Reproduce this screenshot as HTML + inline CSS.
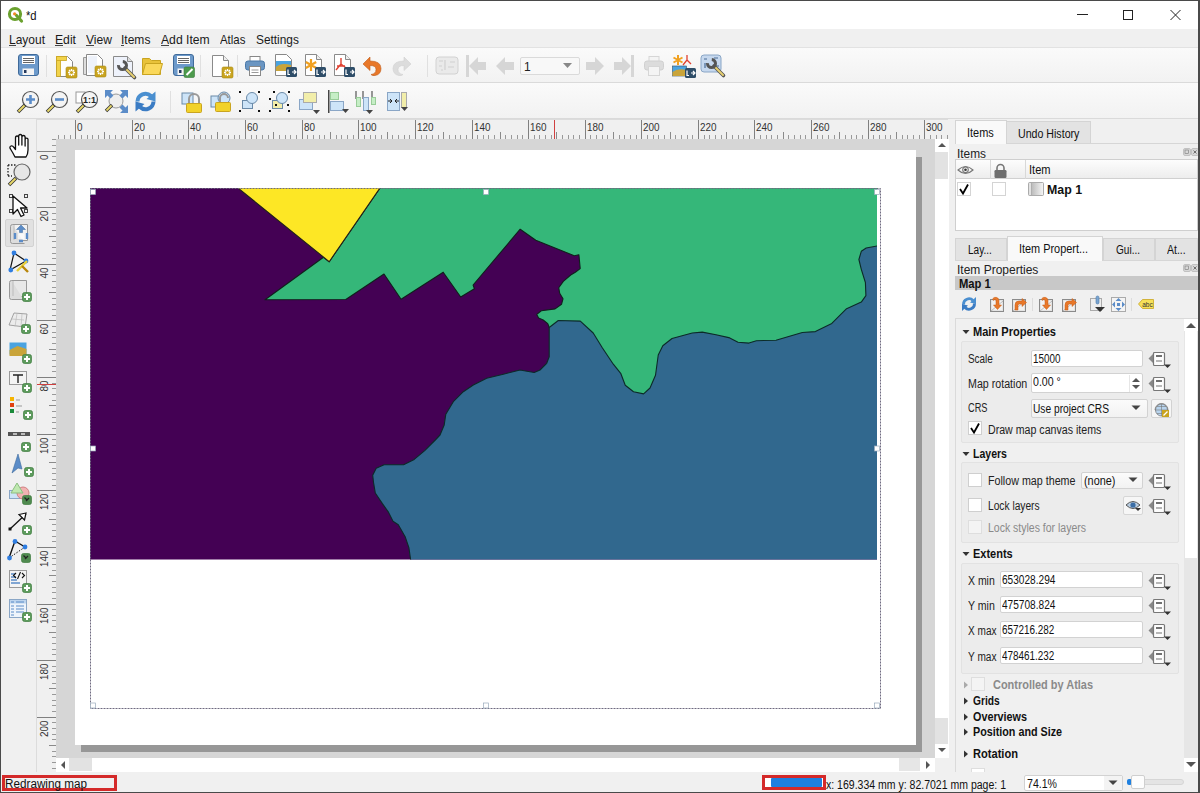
<!DOCTYPE html>
<html><head><meta charset="utf-8">
<style>
*{margin:0;padding:0;box-sizing:border-box}
html,body{width:1200px;height:793px;overflow:hidden}
body{position:relative;background:#f0f0f0;font-family:"Liberation Sans",sans-serif;font-size:12px;color:#000}
.a{position:absolute}
.t{position:absolute;white-space:nowrap;line-height:1;transform-origin:0 0}
svg{position:absolute;overflow:visible}
</style></head><body>
<!-- title bar -->
<div class="a" style="left:0;top:0;width:1200px;height:29px;background:#fff"></div>
<svg style="left:7px;top:6px" width="18" height="18" viewBox="0 0 18 18">
<circle cx="8" cy="8" r="5.6" fill="none" stroke="#6aa12e" stroke-width="3"/>
<path d="M9.5 9.5 L14.5 15" stroke="#6aa12e" stroke-width="3.2" stroke-linecap="round"/>
<circle cx="7.6" cy="7.8" r="1.6" fill="#f08a24"/>
</svg>
<div class="t" style="left:26px;top:9px;font-size:13px;color:#111;transform:scaleX(0.862)">*d</div>
<div class="a" style="left:1077px;top:14px;width:11px;height:1px;background:#222"></div>
<div class="a" style="left:1123px;top:10px;width:10px;height:10px;border:1px solid #222"></div>
<svg style="left:1170px;top:10px" width="11" height="10" viewBox="0 0 11 10"><path d="M0.5 0 L10.5 10 M10.5 0 L0.5 10" stroke="#222" stroke-width="1"/></svg>

<!-- menu bar -->
<div class="a" style="left:0;top:29px;width:1200px;height:18px;background:#f0f0f0"></div>
<div class="t" style="left:9px;top:33px;font-size:13px;color:#1a1a1a;transform:scaleX(0.922)">Layout</div>
<div class="t" style="left:55px;top:33px;font-size:13px;color:#1a1a1a;transform:scaleX(0.937)">Edit</div>
<div class="t" style="left:86px;top:33px;font-size:13px;color:#1a1a1a;transform:scaleX(0.930)">View</div>
<div class="t" style="left:121px;top:33px;font-size:13px;color:#1a1a1a;transform:scaleX(0.925)">Items</div>
<div class="t" style="left:161px;top:33px;font-size:13px;color:#1a1a1a;transform:scaleX(0.936)">Add Item</div>
<div class="t" style="left:220px;top:33px;font-size:13px;color:#1a1a1a;transform:scaleX(0.879)">Atlas</div>
<div class="t" style="left:256px;top:33px;font-size:13px;color:#1a1a1a;transform:scaleX(0.913)">Settings</div>
<div class="a" style="left:9px;top:45px;width:7px;height:1px;background:#444"></div>
<div class="a" style="left:55px;top:45px;width:8px;height:1px;background:#444"></div>
<div class="a" style="left:86px;top:45px;width:8px;height:1px;background:#444"></div>
<div class="a" style="left:121px;top:45px;width:3px;height:1px;background:#444"></div>
<div class="a" style="left:161px;top:45px;width:8px;height:1px;background:#444"></div>

<!-- toolbars bg -->
<div class="a" style="left:0;top:47px;width:1200px;height:36px;background:linear-gradient(#fafafa,#f2f2f2);border-top:1px solid #e2e2e2;border-bottom:1px solid #dadada"></div>
<div class="a" style="left:0;top:83px;width:1200px;height:36px;background:linear-gradient(#fafafa,#f2f2f2);border-bottom:1px solid #dadada"></div>
<!-- separators -->
<div class="a" style="left:46px;top:55px;width:1px;height:22px;background:#e0e0e0"></div>
<div class="a" style="left:200px;top:55px;width:1px;height:22px;background:#e0e0e0"></div>
<div class="a" style="left:237px;top:55px;width:1px;height:22px;background:#e0e0e0"></div>
<div class="a" style="left:427px;top:55px;width:1px;height:22px;background:#e0e0e0"></div>
<div class="a" style="left:170px;top:91px;width:1px;height:22px;background:#e0e0e0"></div>

<svg style="left:17px;top:54px" width="22" height="22" viewBox="0 0 22 22"><rect x="1.5" y="0.5" width="20" height="21" rx="2.5" fill="#6d9acb" stroke="#3f6a9a"/><rect x="5" y="2" width="13" height="8" fill="#fff"/><path d="M6 4.5h11M6 6.5h11M6 8.5h11" stroke="#666" stroke-width="1"/><rect x="5.5" y="14.5" width="11.5" height="6.5" fill="#f4f4f4"/><rect x="7" y="16" width="2.5" height="3" fill="#253a5e"/></svg>
<svg style="left:53px;top:54px" width="24" height="24" viewBox="0 0 24 24"><path d="M3.5 2.5h11l5 5v15h-16z" fill="#fff" stroke="#888"/><path d="M3.5 2.5h4v20h-4z" fill="#f2d34a" stroke="#c9a420" stroke-width="0.8"/><path d="M3.5 2.5h10v4h-10z" fill="#f2d34a" stroke="#c9a420" stroke-width="0.8"/><rect x="13" y="13" width="11" height="11" rx="1.5" fill="#c9a420" stroke="#a98a10" stroke-width="0.6"/><g stroke="#fff" stroke-width="1.3"><path d="M18.5 15v7M15 18.5h7M16 16l5 5M21 16l-5 5"/></g><circle cx="18.5" cy="18.5" r="1.6" fill="#c9a420"/></svg>
<svg style="left:82px;top:53px" width="24" height="25" viewBox="0 0 24 25"><path d="M1.5 4.5h12v17h-12z" fill="#ddd" stroke="#999"/><path d="M4.5 1.5h11l5 5v16h-16z" fill="#fff" stroke="#888"/><rect x="6" y="3" width="9" height="17" fill="#eef2fa"/><rect x="13" y="13" width="11" height="11" rx="1.5" fill="#c9a420" stroke="#a98a10" stroke-width="0.6"/><g stroke="#fff" stroke-width="1.3"><path d="M18.5 15v7M15 18.5h7M16 16l5 5M21 16l-5 5"/></g><circle cx="18.5" cy="18.5" r="1.6" fill="#c9a420"/></svg>
<svg style="left:112px;top:55px" width="24" height="24" viewBox="0 0 24 24"><path d="M1.5 1.5h14l5 5v15h-19z" fill="#eef2fb" stroke="#8a8a8a"/><path d="M15.5 1.5v5h5" fill="#ddd" stroke="#8a8a8a"/><g transform="translate(2,2)"><path d="M11 11l9.5 9.5" stroke="#555" stroke-width="3.6" stroke-linecap="round"/><path d="M12 12l8 8" stroke="#e8d070" stroke-width="2" stroke-linecap="round"/><circle cx="8.5" cy="8.5" r="4" fill="none" stroke="#555" stroke-width="3" stroke-dasharray="12.7 6 6.43 0"/></g></svg>
<svg style="left:141px;top:55px" width="23" height="21" viewBox="0 0 23 21"><path d="M1.5 3.5h7l2 2h9v14h-18z" fill="#e8c23a" stroke="#c9a420"/><path d="M1.5 19.5l3-11h17l-3 11z" fill="#fad85a" stroke="#c9a420"/></svg>
<svg style="left:172px;top:54px" width="23" height="24" viewBox="0 0 23 24"><rect x="1.5" y="0.5" width="20" height="21" rx="2.5" fill="#6d9acb" stroke="#3f6a9a"/><rect x="5" y="2" width="13" height="8" fill="#fff"/><path d="M6 4.5h11M6 6.5h11M6 8.5h11" stroke="#666" stroke-width="1"/><rect x="5.5" y="14.5" width="8" height="6.5" fill="#f4f4f4"/><rect x="7" y="16" width="2.5" height="3" fill="#253a5e"/><rect x="12" y="13" width="10.5" height="10.5" rx="1.5" fill="#4c9a4c" stroke="#3b7a3b" stroke-width="0.6"/><path d="M14.5 21l6-6" stroke="#fff" stroke-width="2"/></svg>
<svg style="left:209px;top:54px" width="24" height="24" viewBox="0 0 24 24"><path d="M3.5 1.5h11l5 5v16h-16z" fill="#fff" stroke="#8a8a8a" stroke-width="1"/><path d="M14.5 1.5v5h5" fill="#eee" stroke="#8a8a8a" stroke-width="1"/><rect x="13" y="13" width="11" height="11" rx="1.5" fill="#c9a420" stroke="#a98a10" stroke-width="0.6"/><g stroke="#fff" stroke-width="1.3"><path d="M18.5 15v7M15 18.5h7M16 16l5 5M21 16l-5 5"/></g><circle cx="18.5" cy="18.5" r="1.6" fill="#c9a420"/></svg>
<svg style="left:244px;top:55px" width="22" height="21" viewBox="0 0 22 21"><rect x="6" y="1.5" width="10" height="5" fill="#fff" stroke="#888"/><rect x="1.5" y="6" width="19" height="9" rx="2.5" fill="#6b96c2" stroke="#4a78a8"/><rect x="5.5" y="11.5" width="11" height="9" fill="#fff" stroke="#888"/><path d="M7.5 15h7M7.5 17.5h7" stroke="#999"/></svg>
<svg style="left:273px;top:53px" width="24" height="25" viewBox="0 0 24 25"><path d="M2.5 1.5h11l5 5v16h-16z" fill="#fff" stroke="#888"/><rect x="3" y="8" width="15" height="10" fill="#4aa3e0"/><path d="M3 14q5-5 15-2v6h-15z" fill="#c9a43a"/><rect x="13" y="14" width="11" height="10" rx="1.5" fill="#2e4d68"/><path d="M15 16.5v5h2M19 19h4M21 17l2 2-2 2" stroke="#fff" stroke-width="1.2" fill="none"/></svg>
<svg style="left:302px;top:53px" width="24" height="25" viewBox="0 0 24 25"><path d="M3.5 1.5h11l5 5v16h-16z" fill="#fff" stroke="#8a8a8a" stroke-width="1"/><path d="M14.5 1.5v5h5" fill="#eee" stroke="#8a8a8a" stroke-width="1"/><g stroke="#f0a020" stroke-width="2.2"><path d="M9 6v12M3.8 9l10.4 6M3.8 15l10.4-6"/></g><rect x="13" y="14" width="11" height="10" rx="1.5" fill="#2e4d68"/><path d="M15 16.5v5h2M19 19h4M21 17l2 2-2 2" stroke="#fff" stroke-width="1.2" fill="none"/></svg>
<svg style="left:331px;top:53px" width="24" height="25" viewBox="0 0 24 25"><path d="M3.5 1.5h11l5 5v16h-16z" fill="#fff" stroke="#8a8a8a" stroke-width="1"/><path d="M14.5 1.5v5h5" fill="#eee" stroke="#8a8a8a" stroke-width="1"/><path d="M10 5v6l-5 6M10 11l5 4M6 13h8" stroke="#e04030" stroke-width="1.4" fill="none"/><rect x="13" y="14" width="11" height="10" rx="1.5" fill="#2e4d68"/><path d="M15 16.5v5h2M19 19h4M21 17l2 2-2 2" stroke="#fff" stroke-width="1.2" fill="none"/></svg>
<svg style="left:362px;top:56px" width="21" height="20" viewBox="0 0 21 20"><path d="M1 8l7-7v4q11 0 11 7.5 0 6-6 7-3 .5-4-1 5-.5 5-5 0-4-6-4v5z" fill="#e8782a" stroke="#c05a18" stroke-width="0.6"/></svg>
<svg style="left:391px;top:56px" width="21" height="20" viewBox="0 0 21 20"><g transform="translate(21,0) scale(-1,1)"><path d="M1 8l7-7v4q11 0 11 7.5 0 6-6 7-3 .5-4-1 5-.5 5-5 0-4-6-4v5z" fill="#dcdcdc" stroke="#d0d0d0" stroke-width="0.6"/></g></svg>
<svg style="left:435px;top:56px" width="24" height="19" viewBox="0 0 24 19"><rect x="1" y="1" width="22" height="17" rx="3" fill="#eaeaea" stroke="#d2d2d2" stroke-width="1"/><path d="M4 5h4M10 4v10M15 6h5M4 10h3M13 11h6M6 14h2" stroke="#d0d0d0" stroke-width="1.2"/></svg>
<svg style="left:466px;top:55px" width="21" height="22" viewBox="0 0 21 22"><rect x="0" y="0" width="3" height="22" fill="#d6d6d6"/><path d="M3 11l9-9v5h8v8h-8v5z" fill="#d6d6d6"/></svg>
<svg style="left:496px;top:56px" width="19" height="20" viewBox="0 0 19 20"><path d="M0 10l9-9v5h9v8h-9v5z" fill="#d6d6d6"/></svg>
<div class="a" style="left:520px;top:57px;width:60px;height:18px;background:#f8f8f8;border:1px solid #dadada;border-radius:2px"></div>
<div class="t" style="left:524px;top:61px;font-size:12px;color:#222">1</div>
<svg style="left:563px;top:63px" width="9" height="6" viewBox="0 0 9 6"><path d="M0 0h9l-4.5 5z" fill="#888"/></svg>
<svg style="left:585px;top:56px" width="19" height="20" viewBox="0 0 19 20"><path d="M19 10l-9-9v5h-9v8h9v5z" fill="#d6d6d6"/></svg>
<svg style="left:613px;top:55px" width="21" height="22" viewBox="0 0 21 22"><rect x="18" y="0" width="3" height="22" fill="#d6d6d6"/><path d="M18 11l-9-9v5h-8v8h8v5z" fill="#d6d6d6"/></svg>
<svg style="left:643px;top:55px" width="22" height="21" viewBox="0 0 22 21"><rect x="6" y="1.5" width="10" height="5" fill="#f4f4f4" stroke="#d6d6d6"/><rect x="1.5" y="6" width="19" height="9" rx="2.5" fill="#dcdcdc" stroke="#d0d0d0"/><rect x="5.5" y="11.5" width="11" height="9" fill="#f4f4f4" stroke="#d6d6d6"/></svg>
<svg style="left:672px;top:54px" width="24" height="24" viewBox="0 0 24 24"><g stroke="#f0a020" stroke-width="2"><path d="M6 1v10M1.5 3.5l9 5M1.5 8.5l9-5"/></g><path d="M15 1v5l-4 5M15 6l4 4" stroke="#e04030" stroke-width="1.3" fill="none"/><rect x="0.5" y="12" width="14" height="10" fill="#4aa3e0" stroke="#2e4d68" stroke-width="0.6"/><path d="M0.5 18q5-4 14-2v6h-14z" fill="#c9a43a"/><rect x="13" y="14" width="11" height="10" rx="1.5" fill="#2e4d68"/><path d="M15 16.5v5h2M19 19h4M21 17l2 2-2 2" stroke="#fff" stroke-width="1.2" fill="none"/></svg>
<svg style="left:700px;top:54px" width="25" height="25" viewBox="0 0 25 25"><rect x="1" y="1" width="20" height="17" rx="3" fill="#c6d8ee" stroke="#8aa6c6"/><path d="M4 5h3M5 9v5M14 4h4M15 12h4" stroke="#4a6c96" stroke-width="1.2"/><g transform="translate(3,1)"><path d="M11 11l9.5 9.5" stroke="#555" stroke-width="3.6" stroke-linecap="round"/><path d="M12 12l8 8" stroke="#e8d070" stroke-width="2" stroke-linecap="round"/><circle cx="8.5" cy="8.5" r="4" fill="none" stroke="#555" stroke-width="3" stroke-dasharray="12.7 6 6.43 0"/></g></svg>
<svg style="left:16px;top:90px" width="24" height="24" viewBox="0 0 24 24"><circle cx="14.5" cy="9.5" r="8" fill="#f4f4f4" stroke="#555" stroke-width="1.2"/><path d="M14.5 5v9M10 9.5h9" stroke="#5b8cc8" stroke-width="2.6"/><path d="M9 15l-7 7" stroke="#333" stroke-width="3.6"/><path d="M8.5 15.5l-6 6" stroke="#e8d86a" stroke-width="2"/></svg>
<svg style="left:45px;top:90px" width="24" height="24" viewBox="0 0 24 24"><circle cx="14.5" cy="9.5" r="8" fill="#f4f4f4" stroke="#555" stroke-width="1.2"/><path d="M10 9.5h9" stroke="#5b8cc8" stroke-width="2.6"/><path d="M9 15l-7 7" stroke="#333" stroke-width="3.6"/><path d="M8.5 15.5l-6 6" stroke="#e8d86a" stroke-width="2"/></svg>
<svg style="left:75px;top:90px" width="24" height="24" viewBox="0 0 24 24"><rect x="1" y="2" width="9" height="11" fill="#fff" stroke="#999"/><circle cx="14.5" cy="9.5" r="8" fill="#f4f4f4" stroke="#555" stroke-width="1.2"/><text x="14.5" y="13" text-anchor="middle" font-size="9" font-weight="bold" font-family="Liberation Sans" fill="#222">1:1</text><path d="M9 15l-7 7" stroke="#333" stroke-width="3.6"/><path d="M8.5 15.5l-6 6" stroke="#e8d86a" stroke-width="2"/></svg>
<svg style="left:104px;top:89px" width="25" height="25" viewBox="0 0 25 25"><circle cx="12" cy="12" r="7" fill="#eee" stroke="#999"/><path d="M1 1h8l-2.5 2.5 3 3-3 3-3-3L1 9zM24 1h-8l2.5 2.5-3 3 3 3 3-3L24 9zM24 24h-8l2.5-2.5-3-3 3-3 3 3 2.5-2.5z" fill="#5b8cc8"/><path d="M8 16l-6 6" stroke="#333" stroke-width="3.4"/><path d="M7.5 16.5l-5 5" stroke="#e8d86a" stroke-width="1.8"/></svg>
<svg style="left:134px;top:90px" width="23" height="23" viewBox="0 0 23 23"><path d="M3.5 11.5A8 8 0 0 1 17 6" stroke="#4a8fd0" stroke-width="4" fill="none"/><path d="M21.5 1.5V11.5L12.5 9z" fill="#4a8fd0"/><path d="M19.5 11.5A8 8 0 0 1 6 17" stroke="#3b7cc4" stroke-width="4" fill="none"/><path d="M1.5 21.5V11.5L10.5 14z" fill="#3b7cc4"/></svg>
<svg style="left:181px;top:92px" width="22" height="21" viewBox="0 0 22 21"><rect x="1" y="1" width="11" height="11" fill="#cde4f8" stroke="#6a8aa8"/><path d="M8 12V7a5 5 0 0 1 10 0v5" stroke="#999" stroke-width="2" fill="none"/><rect x="5.5" y="11.5" width="15" height="9" rx="1" fill="#f2d22a" stroke="#c9a420"/></svg>
<svg style="left:210px;top:91px" width="22" height="22" viewBox="0 0 22 22"><rect x="1" y="5" width="11" height="11" fill="#cde4f8" stroke="#6a8aa8"/><circle cx="14" cy="7" r="6" fill="#cde4f8" stroke="#6a8aa8"/><path d="M10 12V7a4 4 0 0 1 8 0" stroke="#999" stroke-width="2" fill="none"/><rect x="5.5" y="11.5" width="15" height="9" rx="1" fill="#f2d22a" stroke="#c9a420"/></svg>
<svg style="left:239px;top:91px" width="22" height="21" viewBox="0 0 22 21"><rect x="3.5" y="9.5" width="10" height="8" fill="#cde4f8" stroke="#6a8aa8"/><circle cx="13" cy="7" r="5.5" fill="#cde4f8" stroke="#6a8aa8"/><g fill="#111"><rect x="0" y="0" width="2" height="2"/><rect x="19" y="0" width="2" height="2"/><rect x="0" y="19" width="2" height="2"/><rect x="19" y="19" width="2" height="2"/></g></svg>
<svg style="left:269px;top:91px" width="22" height="21" viewBox="0 0 22 21"><rect x="3.5" y="9.5" width="10" height="8" fill="#f2eeaa" stroke="#6a8aa8"/><circle cx="13" cy="7" r="5.5" fill="#cde4f8" stroke="#6a8aa8"/><g fill="#111"><rect x="4" y="0" width="2" height="2"/><rect x="19" y="0" width="2" height="2"/><rect x="0" y="7" width="2" height="2"/><rect x="6" y="13" width="2" height="2"/><rect x="0" y="19" width="2" height="2"/><rect x="19" y="19" width="2" height="2"/><rect x="18" y="13" width="2" height="2"/></g></svg>
<svg style="left:298px;top:91px" width="23" height="22" viewBox="0 0 23 22"><rect x="1.5" y="8.5" width="13" height="10" fill="#cde4f8" stroke="#8aa6c6"/><rect x="5.5" y="1.5" width="13" height="10" fill="#f2eeaa" stroke="#aaa"/><path d="M15 19h7l-3.5 4z" fill="#444"/></svg>
<svg style="left:327px;top:90px" width="23" height="23" viewBox="0 0 23 23"><rect x="1" y="0" width="1.5" height="23" fill="#444"/><rect x="3.5" y="2.5" width="8" height="7" fill="#c6eec6" stroke="#9c9"/><rect x="3.5" y="11.5" width="13" height="9" fill="#cde4f8" stroke="#8aa6c6"/><path d="M15 19h7l-3.5 4z" fill="#444"/></svg>
<svg style="left:355px;top:91px" width="24" height="22" viewBox="0 0 24 22"><path d="M1 0v8M8 0v8M17 0v8" stroke="#555" stroke-width="1.2"/><rect x="1.5" y="6.5" width="4" height="9" fill="#c6eec6" stroke="#9c9"/><rect x="8.5" y="6.5" width="5" height="13" fill="#cde4f8" stroke="#8aa6c6"/><rect x="16.5" y="6.5" width="4" height="7" fill="#c6eec6" stroke="#9c9"/><path d="M11 19h7l-3.5 4z" fill="#444"/></svg>
<svg style="left:386px;top:91px" width="23" height="21" viewBox="0 0 23 21"><rect x="1.5" y="1.5" width="12" height="18" fill="#cde4f8" stroke="#8aa6c6"/><path d="M2 10h4M4 8l2 2-2 2M13 10h-4M11 8l-2 2 2 2" stroke="#222" stroke-width="1" fill="none"/><rect x="15.5" y="1.5" width="5" height="15" fill="#f2eeaa" stroke="#aaa"/><path d="M15 16h7l-3.5 4z" fill="#444"/></svg>
<div class="a" style="left:1px;top:119px;width:36px;height:653px;background:#f0f0f0"></div>
<div class="a" style="left:36px;top:119px;width:1px;height:653px;background:#dcdcdc"></div>
<div class="a" style="left:37px;top:119px;width:911px;height:20px;background:#f0f0f0;border-top:1px solid #dcdcdc"></div>
<div class="a" style="left:37px;top:139px;width:19px;height:633px;background:#f0f0f0"></div>
<svg style="left:0;top:0" width="1200" height="793" viewBox="0 0 1200 793">
<line x1="58.5" y1="135" x2="58.5" y2="139" stroke="#999" stroke-width="1"/>
<line x1="64.5" y1="135" x2="64.5" y2="139" stroke="#999" stroke-width="1"/>
<line x1="70.5" y1="135" x2="70.5" y2="139" stroke="#999" stroke-width="1"/>
<line x1="75.5" y1="120" x2="75.5" y2="139" stroke="#808080" stroke-width="1"/>
<text transform="translate(77.0,131) scale(0.9,1)" font-size="11" fill="#333" font-family="Liberation Sans">0</text>
<line x1="81.5" y1="135" x2="81.5" y2="139" stroke="#999" stroke-width="1"/>
<line x1="87.5" y1="135" x2="87.5" y2="139" stroke="#999" stroke-width="1"/>
<line x1="92.5" y1="135" x2="92.5" y2="139" stroke="#999" stroke-width="1"/>
<line x1="98.5" y1="135" x2="98.5" y2="139" stroke="#999" stroke-width="1"/>
<line x1="104.5" y1="132" x2="104.5" y2="139" stroke="#8a8a8a" stroke-width="1"/>
<line x1="109.5" y1="135" x2="109.5" y2="139" stroke="#999" stroke-width="1"/>
<line x1="115.5" y1="135" x2="115.5" y2="139" stroke="#999" stroke-width="1"/>
<line x1="121.5" y1="135" x2="121.5" y2="139" stroke="#999" stroke-width="1"/>
<line x1="126.5" y1="135" x2="126.5" y2="139" stroke="#999" stroke-width="1"/>
<line x1="132.5" y1="120" x2="132.5" y2="139" stroke="#808080" stroke-width="1"/>
<text transform="translate(134.0,131) scale(0.9,1)" font-size="11" fill="#333" font-family="Liberation Sans">20</text>
<line x1="138.5" y1="135" x2="138.5" y2="139" stroke="#999" stroke-width="1"/>
<line x1="143.5" y1="135" x2="143.5" y2="139" stroke="#999" stroke-width="1"/>
<line x1="149.5" y1="135" x2="149.5" y2="139" stroke="#999" stroke-width="1"/>
<line x1="155.5" y1="135" x2="155.5" y2="139" stroke="#999" stroke-width="1"/>
<line x1="160.5" y1="132" x2="160.5" y2="139" stroke="#8a8a8a" stroke-width="1"/>
<line x1="166.5" y1="135" x2="166.5" y2="139" stroke="#999" stroke-width="1"/>
<line x1="172.5" y1="135" x2="172.5" y2="139" stroke="#999" stroke-width="1"/>
<line x1="177.5" y1="135" x2="177.5" y2="139" stroke="#999" stroke-width="1"/>
<line x1="183.5" y1="135" x2="183.5" y2="139" stroke="#999" stroke-width="1"/>
<line x1="188.5" y1="120" x2="188.5" y2="139" stroke="#808080" stroke-width="1"/>
<text transform="translate(190.0,131) scale(0.9,1)" font-size="11" fill="#333" font-family="Liberation Sans">40</text>
<line x1="194.5" y1="135" x2="194.5" y2="139" stroke="#999" stroke-width="1"/>
<line x1="200.5" y1="135" x2="200.5" y2="139" stroke="#999" stroke-width="1"/>
<line x1="205.5" y1="135" x2="205.5" y2="139" stroke="#999" stroke-width="1"/>
<line x1="211.5" y1="135" x2="211.5" y2="139" stroke="#999" stroke-width="1"/>
<line x1="217.5" y1="132" x2="217.5" y2="139" stroke="#8a8a8a" stroke-width="1"/>
<line x1="222.5" y1="135" x2="222.5" y2="139" stroke="#999" stroke-width="1"/>
<line x1="228.5" y1="135" x2="228.5" y2="139" stroke="#999" stroke-width="1"/>
<line x1="234.5" y1="135" x2="234.5" y2="139" stroke="#999" stroke-width="1"/>
<line x1="239.5" y1="135" x2="239.5" y2="139" stroke="#999" stroke-width="1"/>
<line x1="245.5" y1="120" x2="245.5" y2="139" stroke="#808080" stroke-width="1"/>
<text transform="translate(247.0,131) scale(0.9,1)" font-size="11" fill="#333" font-family="Liberation Sans">60</text>
<line x1="251.5" y1="135" x2="251.5" y2="139" stroke="#999" stroke-width="1"/>
<line x1="256.5" y1="135" x2="256.5" y2="139" stroke="#999" stroke-width="1"/>
<line x1="262.5" y1="135" x2="262.5" y2="139" stroke="#999" stroke-width="1"/>
<line x1="268.5" y1="135" x2="268.5" y2="139" stroke="#999" stroke-width="1"/>
<line x1="273.5" y1="132" x2="273.5" y2="139" stroke="#8a8a8a" stroke-width="1"/>
<line x1="279.5" y1="135" x2="279.5" y2="139" stroke="#999" stroke-width="1"/>
<line x1="285.5" y1="135" x2="285.5" y2="139" stroke="#999" stroke-width="1"/>
<line x1="290.5" y1="135" x2="290.5" y2="139" stroke="#999" stroke-width="1"/>
<line x1="296.5" y1="135" x2="296.5" y2="139" stroke="#999" stroke-width="1"/>
<line x1="302.5" y1="120" x2="302.5" y2="139" stroke="#808080" stroke-width="1"/>
<text transform="translate(304.0,131) scale(0.9,1)" font-size="11" fill="#333" font-family="Liberation Sans">80</text>
<line x1="307.5" y1="135" x2="307.5" y2="139" stroke="#999" stroke-width="1"/>
<line x1="313.5" y1="135" x2="313.5" y2="139" stroke="#999" stroke-width="1"/>
<line x1="319.5" y1="135" x2="319.5" y2="139" stroke="#999" stroke-width="1"/>
<line x1="324.5" y1="135" x2="324.5" y2="139" stroke="#999" stroke-width="1"/>
<line x1="330.5" y1="132" x2="330.5" y2="139" stroke="#8a8a8a" stroke-width="1"/>
<line x1="336.5" y1="135" x2="336.5" y2="139" stroke="#999" stroke-width="1"/>
<line x1="341.5" y1="135" x2="341.5" y2="139" stroke="#999" stroke-width="1"/>
<line x1="347.5" y1="135" x2="347.5" y2="139" stroke="#999" stroke-width="1"/>
<line x1="353.5" y1="135" x2="353.5" y2="139" stroke="#999" stroke-width="1"/>
<line x1="358.5" y1="120" x2="358.5" y2="139" stroke="#808080" stroke-width="1"/>
<text transform="translate(360.0,131) scale(0.9,1)" font-size="11" fill="#333" font-family="Liberation Sans">100</text>
<line x1="364.5" y1="135" x2="364.5" y2="139" stroke="#999" stroke-width="1"/>
<line x1="370.5" y1="135" x2="370.5" y2="139" stroke="#999" stroke-width="1"/>
<line x1="375.5" y1="135" x2="375.5" y2="139" stroke="#999" stroke-width="1"/>
<line x1="381.5" y1="135" x2="381.5" y2="139" stroke="#999" stroke-width="1"/>
<line x1="387.5" y1="132" x2="387.5" y2="139" stroke="#8a8a8a" stroke-width="1"/>
<line x1="392.5" y1="135" x2="392.5" y2="139" stroke="#999" stroke-width="1"/>
<line x1="398.5" y1="135" x2="398.5" y2="139" stroke="#999" stroke-width="1"/>
<line x1="404.5" y1="135" x2="404.5" y2="139" stroke="#999" stroke-width="1"/>
<line x1="409.5" y1="135" x2="409.5" y2="139" stroke="#999" stroke-width="1"/>
<line x1="415.5" y1="120" x2="415.5" y2="139" stroke="#808080" stroke-width="1"/>
<text transform="translate(417.0,131) scale(0.9,1)" font-size="11" fill="#333" font-family="Liberation Sans">120</text>
<line x1="421.5" y1="135" x2="421.5" y2="139" stroke="#999" stroke-width="1"/>
<line x1="426.5" y1="135" x2="426.5" y2="139" stroke="#999" stroke-width="1"/>
<line x1="432.5" y1="135" x2="432.5" y2="139" stroke="#999" stroke-width="1"/>
<line x1="438.5" y1="135" x2="438.5" y2="139" stroke="#999" stroke-width="1"/>
<line x1="443.5" y1="132" x2="443.5" y2="139" stroke="#8a8a8a" stroke-width="1"/>
<line x1="449.5" y1="135" x2="449.5" y2="139" stroke="#999" stroke-width="1"/>
<line x1="455.5" y1="135" x2="455.5" y2="139" stroke="#999" stroke-width="1"/>
<line x1="460.5" y1="135" x2="460.5" y2="139" stroke="#999" stroke-width="1"/>
<line x1="466.5" y1="135" x2="466.5" y2="139" stroke="#999" stroke-width="1"/>
<line x1="472.5" y1="120" x2="472.5" y2="139" stroke="#808080" stroke-width="1"/>
<text transform="translate(474.0,131) scale(0.9,1)" font-size="11" fill="#333" font-family="Liberation Sans">140</text>
<line x1="477.5" y1="135" x2="477.5" y2="139" stroke="#999" stroke-width="1"/>
<line x1="483.5" y1="135" x2="483.5" y2="139" stroke="#999" stroke-width="1"/>
<line x1="488.5" y1="135" x2="488.5" y2="139" stroke="#999" stroke-width="1"/>
<line x1="494.5" y1="135" x2="494.5" y2="139" stroke="#999" stroke-width="1"/>
<line x1="500.5" y1="132" x2="500.5" y2="139" stroke="#8a8a8a" stroke-width="1"/>
<line x1="505.5" y1="135" x2="505.5" y2="139" stroke="#999" stroke-width="1"/>
<line x1="511.5" y1="135" x2="511.5" y2="139" stroke="#999" stroke-width="1"/>
<line x1="517.5" y1="135" x2="517.5" y2="139" stroke="#999" stroke-width="1"/>
<line x1="522.5" y1="135" x2="522.5" y2="139" stroke="#999" stroke-width="1"/>
<line x1="528.5" y1="120" x2="528.5" y2="139" stroke="#808080" stroke-width="1"/>
<text transform="translate(530.0,131) scale(0.9,1)" font-size="11" fill="#333" font-family="Liberation Sans">160</text>
<line x1="534.5" y1="135" x2="534.5" y2="139" stroke="#999" stroke-width="1"/>
<line x1="539.5" y1="135" x2="539.5" y2="139" stroke="#999" stroke-width="1"/>
<line x1="545.5" y1="135" x2="545.5" y2="139" stroke="#999" stroke-width="1"/>
<line x1="551.5" y1="135" x2="551.5" y2="139" stroke="#999" stroke-width="1"/>
<line x1="556.5" y1="132" x2="556.5" y2="139" stroke="#8a8a8a" stroke-width="1"/>
<line x1="562.5" y1="135" x2="562.5" y2="139" stroke="#999" stroke-width="1"/>
<line x1="568.5" y1="135" x2="568.5" y2="139" stroke="#999" stroke-width="1"/>
<line x1="573.5" y1="135" x2="573.5" y2="139" stroke="#999" stroke-width="1"/>
<line x1="579.5" y1="135" x2="579.5" y2="139" stroke="#999" stroke-width="1"/>
<line x1="585.5" y1="120" x2="585.5" y2="139" stroke="#808080" stroke-width="1"/>
<text transform="translate(587.0,131) scale(0.9,1)" font-size="11" fill="#333" font-family="Liberation Sans">180</text>
<line x1="590.5" y1="135" x2="590.5" y2="139" stroke="#999" stroke-width="1"/>
<line x1="596.5" y1="135" x2="596.5" y2="139" stroke="#999" stroke-width="1"/>
<line x1="602.5" y1="135" x2="602.5" y2="139" stroke="#999" stroke-width="1"/>
<line x1="607.5" y1="135" x2="607.5" y2="139" stroke="#999" stroke-width="1"/>
<line x1="613.5" y1="132" x2="613.5" y2="139" stroke="#8a8a8a" stroke-width="1"/>
<line x1="619.5" y1="135" x2="619.5" y2="139" stroke="#999" stroke-width="1"/>
<line x1="624.5" y1="135" x2="624.5" y2="139" stroke="#999" stroke-width="1"/>
<line x1="630.5" y1="135" x2="630.5" y2="139" stroke="#999" stroke-width="1"/>
<line x1="636.5" y1="135" x2="636.5" y2="139" stroke="#999" stroke-width="1"/>
<line x1="641.5" y1="120" x2="641.5" y2="139" stroke="#808080" stroke-width="1"/>
<text transform="translate(643.0,131) scale(0.9,1)" font-size="11" fill="#333" font-family="Liberation Sans">200</text>
<line x1="647.5" y1="135" x2="647.5" y2="139" stroke="#999" stroke-width="1"/>
<line x1="653.5" y1="135" x2="653.5" y2="139" stroke="#999" stroke-width="1"/>
<line x1="658.5" y1="135" x2="658.5" y2="139" stroke="#999" stroke-width="1"/>
<line x1="664.5" y1="135" x2="664.5" y2="139" stroke="#999" stroke-width="1"/>
<line x1="670.5" y1="132" x2="670.5" y2="139" stroke="#8a8a8a" stroke-width="1"/>
<line x1="675.5" y1="135" x2="675.5" y2="139" stroke="#999" stroke-width="1"/>
<line x1="681.5" y1="135" x2="681.5" y2="139" stroke="#999" stroke-width="1"/>
<line x1="687.5" y1="135" x2="687.5" y2="139" stroke="#999" stroke-width="1"/>
<line x1="692.5" y1="135" x2="692.5" y2="139" stroke="#999" stroke-width="1"/>
<line x1="698.5" y1="120" x2="698.5" y2="139" stroke="#808080" stroke-width="1"/>
<text transform="translate(700.0,131) scale(0.9,1)" font-size="11" fill="#333" font-family="Liberation Sans">220</text>
<line x1="704.5" y1="135" x2="704.5" y2="139" stroke="#999" stroke-width="1"/>
<line x1="709.5" y1="135" x2="709.5" y2="139" stroke="#999" stroke-width="1"/>
<line x1="715.5" y1="135" x2="715.5" y2="139" stroke="#999" stroke-width="1"/>
<line x1="721.5" y1="135" x2="721.5" y2="139" stroke="#999" stroke-width="1"/>
<line x1="726.5" y1="132" x2="726.5" y2="139" stroke="#8a8a8a" stroke-width="1"/>
<line x1="732.5" y1="135" x2="732.5" y2="139" stroke="#999" stroke-width="1"/>
<line x1="738.5" y1="135" x2="738.5" y2="139" stroke="#999" stroke-width="1"/>
<line x1="743.5" y1="135" x2="743.5" y2="139" stroke="#999" stroke-width="1"/>
<line x1="749.5" y1="135" x2="749.5" y2="139" stroke="#999" stroke-width="1"/>
<line x1="754.5" y1="120" x2="754.5" y2="139" stroke="#808080" stroke-width="1"/>
<text transform="translate(756.0,131) scale(0.9,1)" font-size="11" fill="#333" font-family="Liberation Sans">240</text>
<line x1="760.5" y1="135" x2="760.5" y2="139" stroke="#999" stroke-width="1"/>
<line x1="766.5" y1="135" x2="766.5" y2="139" stroke="#999" stroke-width="1"/>
<line x1="771.5" y1="135" x2="771.5" y2="139" stroke="#999" stroke-width="1"/>
<line x1="777.5" y1="135" x2="777.5" y2="139" stroke="#999" stroke-width="1"/>
<line x1="783.5" y1="132" x2="783.5" y2="139" stroke="#8a8a8a" stroke-width="1"/>
<line x1="788.5" y1="135" x2="788.5" y2="139" stroke="#999" stroke-width="1"/>
<line x1="794.5" y1="135" x2="794.5" y2="139" stroke="#999" stroke-width="1"/>
<line x1="800.5" y1="135" x2="800.5" y2="139" stroke="#999" stroke-width="1"/>
<line x1="805.5" y1="135" x2="805.5" y2="139" stroke="#999" stroke-width="1"/>
<line x1="811.5" y1="120" x2="811.5" y2="139" stroke="#808080" stroke-width="1"/>
<text transform="translate(813.0,131) scale(0.9,1)" font-size="11" fill="#333" font-family="Liberation Sans">260</text>
<line x1="817.5" y1="135" x2="817.5" y2="139" stroke="#999" stroke-width="1"/>
<line x1="822.5" y1="135" x2="822.5" y2="139" stroke="#999" stroke-width="1"/>
<line x1="828.5" y1="135" x2="828.5" y2="139" stroke="#999" stroke-width="1"/>
<line x1="834.5" y1="135" x2="834.5" y2="139" stroke="#999" stroke-width="1"/>
<line x1="839.5" y1="132" x2="839.5" y2="139" stroke="#8a8a8a" stroke-width="1"/>
<line x1="845.5" y1="135" x2="845.5" y2="139" stroke="#999" stroke-width="1"/>
<line x1="851.5" y1="135" x2="851.5" y2="139" stroke="#999" stroke-width="1"/>
<line x1="856.5" y1="135" x2="856.5" y2="139" stroke="#999" stroke-width="1"/>
<line x1="862.5" y1="135" x2="862.5" y2="139" stroke="#999" stroke-width="1"/>
<line x1="868.5" y1="120" x2="868.5" y2="139" stroke="#808080" stroke-width="1"/>
<text transform="translate(870.0,131) scale(0.9,1)" font-size="11" fill="#333" font-family="Liberation Sans">280</text>
<line x1="873.5" y1="135" x2="873.5" y2="139" stroke="#999" stroke-width="1"/>
<line x1="879.5" y1="135" x2="879.5" y2="139" stroke="#999" stroke-width="1"/>
<line x1="885.5" y1="135" x2="885.5" y2="139" stroke="#999" stroke-width="1"/>
<line x1="890.5" y1="135" x2="890.5" y2="139" stroke="#999" stroke-width="1"/>
<line x1="896.5" y1="132" x2="896.5" y2="139" stroke="#8a8a8a" stroke-width="1"/>
<line x1="902.5" y1="135" x2="902.5" y2="139" stroke="#999" stroke-width="1"/>
<line x1="907.5" y1="135" x2="907.5" y2="139" stroke="#999" stroke-width="1"/>
<line x1="913.5" y1="135" x2="913.5" y2="139" stroke="#999" stroke-width="1"/>
<line x1="919.5" y1="135" x2="919.5" y2="139" stroke="#999" stroke-width="1"/>
<line x1="924.5" y1="120" x2="924.5" y2="139" stroke="#808080" stroke-width="1"/>
<text transform="translate(926.0,131) scale(0.9,1)" font-size="11" fill="#333" font-family="Liberation Sans">300</text>
<line x1="930.5" y1="135" x2="930.5" y2="139" stroke="#999" stroke-width="1"/>
<line x1="936.5" y1="135" x2="936.5" y2="139" stroke="#999" stroke-width="1"/>
<line x1="941.5" y1="135" x2="941.5" y2="139" stroke="#999" stroke-width="1"/>
<line x1="947.5" y1="135" x2="947.5" y2="139" stroke="#999" stroke-width="1"/>
<line x1="52" y1="139.5" x2="56" y2="139.5" stroke="#999" stroke-width="1"/>
<line x1="52" y1="145.5" x2="56" y2="145.5" stroke="#999" stroke-width="1"/>
<line x1="37" y1="151.5" x2="56" y2="151.5" stroke="#808080" stroke-width="1"/>
<text transform="translate(48,154.5) rotate(-90) scale(0.9,1)" text-anchor="end" font-size="11" fill="#333" font-family="Liberation Sans">0</text>
<line x1="52" y1="156.5" x2="56" y2="156.5" stroke="#999" stroke-width="1"/>
<line x1="52" y1="162.5" x2="56" y2="162.5" stroke="#999" stroke-width="1"/>
<line x1="52" y1="168.5" x2="56" y2="168.5" stroke="#999" stroke-width="1"/>
<line x1="52" y1="173.5" x2="56" y2="173.5" stroke="#999" stroke-width="1"/>
<line x1="49" y1="179.5" x2="56" y2="179.5" stroke="#8a8a8a" stroke-width="1"/>
<line x1="52" y1="185.5" x2="56" y2="185.5" stroke="#999" stroke-width="1"/>
<line x1="52" y1="190.5" x2="56" y2="190.5" stroke="#999" stroke-width="1"/>
<line x1="52" y1="196.5" x2="56" y2="196.5" stroke="#999" stroke-width="1"/>
<line x1="52" y1="202.5" x2="56" y2="202.5" stroke="#999" stroke-width="1"/>
<line x1="37" y1="207.5" x2="56" y2="207.5" stroke="#808080" stroke-width="1"/>
<text transform="translate(48,210.5) rotate(-90) scale(0.9,1)" text-anchor="end" font-size="11" fill="#333" font-family="Liberation Sans">20</text>
<line x1="52" y1="213.5" x2="56" y2="213.5" stroke="#999" stroke-width="1"/>
<line x1="52" y1="219.5" x2="56" y2="219.5" stroke="#999" stroke-width="1"/>
<line x1="52" y1="224.5" x2="56" y2="224.5" stroke="#999" stroke-width="1"/>
<line x1="52" y1="230.5" x2="56" y2="230.5" stroke="#999" stroke-width="1"/>
<line x1="49" y1="236.5" x2="56" y2="236.5" stroke="#8a8a8a" stroke-width="1"/>
<line x1="52" y1="241.5" x2="56" y2="241.5" stroke="#999" stroke-width="1"/>
<line x1="52" y1="247.5" x2="56" y2="247.5" stroke="#999" stroke-width="1"/>
<line x1="52" y1="253.5" x2="56" y2="253.5" stroke="#999" stroke-width="1"/>
<line x1="52" y1="258.5" x2="56" y2="258.5" stroke="#999" stroke-width="1"/>
<line x1="37" y1="264.5" x2="56" y2="264.5" stroke="#808080" stroke-width="1"/>
<text transform="translate(48,267.5) rotate(-90) scale(0.9,1)" text-anchor="end" font-size="11" fill="#333" font-family="Liberation Sans">40</text>
<line x1="52" y1="270.5" x2="56" y2="270.5" stroke="#999" stroke-width="1"/>
<line x1="52" y1="275.5" x2="56" y2="275.5" stroke="#999" stroke-width="1"/>
<line x1="52" y1="281.5" x2="56" y2="281.5" stroke="#999" stroke-width="1"/>
<line x1="52" y1="287.5" x2="56" y2="287.5" stroke="#999" stroke-width="1"/>
<line x1="49" y1="292.5" x2="56" y2="292.5" stroke="#8a8a8a" stroke-width="1"/>
<line x1="52" y1="298.5" x2="56" y2="298.5" stroke="#999" stroke-width="1"/>
<line x1="52" y1="304.5" x2="56" y2="304.5" stroke="#999" stroke-width="1"/>
<line x1="52" y1="309.5" x2="56" y2="309.5" stroke="#999" stroke-width="1"/>
<line x1="52" y1="315.5" x2="56" y2="315.5" stroke="#999" stroke-width="1"/>
<line x1="37" y1="320.5" x2="56" y2="320.5" stroke="#808080" stroke-width="1"/>
<text transform="translate(48,323.5) rotate(-90) scale(0.9,1)" text-anchor="end" font-size="11" fill="#333" font-family="Liberation Sans">60</text>
<line x1="52" y1="326.5" x2="56" y2="326.5" stroke="#999" stroke-width="1"/>
<line x1="52" y1="332.5" x2="56" y2="332.5" stroke="#999" stroke-width="1"/>
<line x1="52" y1="337.5" x2="56" y2="337.5" stroke="#999" stroke-width="1"/>
<line x1="52" y1="343.5" x2="56" y2="343.5" stroke="#999" stroke-width="1"/>
<line x1="49" y1="349.5" x2="56" y2="349.5" stroke="#8a8a8a" stroke-width="1"/>
<line x1="52" y1="354.5" x2="56" y2="354.5" stroke="#999" stroke-width="1"/>
<line x1="52" y1="360.5" x2="56" y2="360.5" stroke="#999" stroke-width="1"/>
<line x1="52" y1="366.5" x2="56" y2="366.5" stroke="#999" stroke-width="1"/>
<line x1="52" y1="371.5" x2="56" y2="371.5" stroke="#999" stroke-width="1"/>
<line x1="37" y1="377.5" x2="56" y2="377.5" stroke="#808080" stroke-width="1"/>
<text transform="translate(48,380.5) rotate(-90) scale(0.9,1)" text-anchor="end" font-size="11" fill="#333" font-family="Liberation Sans">80</text>
<line x1="52" y1="383.5" x2="56" y2="383.5" stroke="#999" stroke-width="1"/>
<line x1="52" y1="388.5" x2="56" y2="388.5" stroke="#999" stroke-width="1"/>
<line x1="52" y1="394.5" x2="56" y2="394.5" stroke="#999" stroke-width="1"/>
<line x1="52" y1="400.5" x2="56" y2="400.5" stroke="#999" stroke-width="1"/>
<line x1="49" y1="405.5" x2="56" y2="405.5" stroke="#8a8a8a" stroke-width="1"/>
<line x1="52" y1="411.5" x2="56" y2="411.5" stroke="#999" stroke-width="1"/>
<line x1="52" y1="417.5" x2="56" y2="417.5" stroke="#999" stroke-width="1"/>
<line x1="52" y1="422.5" x2="56" y2="422.5" stroke="#999" stroke-width="1"/>
<line x1="52" y1="428.5" x2="56" y2="428.5" stroke="#999" stroke-width="1"/>
<line x1="37" y1="434.5" x2="56" y2="434.5" stroke="#808080" stroke-width="1"/>
<text transform="translate(48,437.5) rotate(-90) scale(0.9,1)" text-anchor="end" font-size="11" fill="#333" font-family="Liberation Sans">100</text>
<line x1="52" y1="439.5" x2="56" y2="439.5" stroke="#999" stroke-width="1"/>
<line x1="52" y1="445.5" x2="56" y2="445.5" stroke="#999" stroke-width="1"/>
<line x1="52" y1="451.5" x2="56" y2="451.5" stroke="#999" stroke-width="1"/>
<line x1="52" y1="456.5" x2="56" y2="456.5" stroke="#999" stroke-width="1"/>
<line x1="49" y1="462.5" x2="56" y2="462.5" stroke="#8a8a8a" stroke-width="1"/>
<line x1="52" y1="468.5" x2="56" y2="468.5" stroke="#999" stroke-width="1"/>
<line x1="52" y1="473.5" x2="56" y2="473.5" stroke="#999" stroke-width="1"/>
<line x1="52" y1="479.5" x2="56" y2="479.5" stroke="#999" stroke-width="1"/>
<line x1="52" y1="485.5" x2="56" y2="485.5" stroke="#999" stroke-width="1"/>
<line x1="37" y1="490.5" x2="56" y2="490.5" stroke="#808080" stroke-width="1"/>
<text transform="translate(48,493.5) rotate(-90) scale(0.9,1)" text-anchor="end" font-size="11" fill="#333" font-family="Liberation Sans">120</text>
<line x1="52" y1="496.5" x2="56" y2="496.5" stroke="#999" stroke-width="1"/>
<line x1="52" y1="502.5" x2="56" y2="502.5" stroke="#999" stroke-width="1"/>
<line x1="52" y1="507.5" x2="56" y2="507.5" stroke="#999" stroke-width="1"/>
<line x1="52" y1="513.5" x2="56" y2="513.5" stroke="#999" stroke-width="1"/>
<line x1="49" y1="519.5" x2="56" y2="519.5" stroke="#8a8a8a" stroke-width="1"/>
<line x1="52" y1="524.5" x2="56" y2="524.5" stroke="#999" stroke-width="1"/>
<line x1="52" y1="530.5" x2="56" y2="530.5" stroke="#999" stroke-width="1"/>
<line x1="52" y1="536.5" x2="56" y2="536.5" stroke="#999" stroke-width="1"/>
<line x1="52" y1="541.5" x2="56" y2="541.5" stroke="#999" stroke-width="1"/>
<line x1="37" y1="547.5" x2="56" y2="547.5" stroke="#808080" stroke-width="1"/>
<text transform="translate(48,550.5) rotate(-90) scale(0.9,1)" text-anchor="end" font-size="11" fill="#333" font-family="Liberation Sans">140</text>
<line x1="52" y1="553.5" x2="56" y2="553.5" stroke="#999" stroke-width="1"/>
<line x1="52" y1="558.5" x2="56" y2="558.5" stroke="#999" stroke-width="1"/>
<line x1="52" y1="564.5" x2="56" y2="564.5" stroke="#999" stroke-width="1"/>
<line x1="52" y1="570.5" x2="56" y2="570.5" stroke="#999" stroke-width="1"/>
<line x1="49" y1="575.5" x2="56" y2="575.5" stroke="#8a8a8a" stroke-width="1"/>
<line x1="52" y1="581.5" x2="56" y2="581.5" stroke="#999" stroke-width="1"/>
<line x1="52" y1="587.5" x2="56" y2="587.5" stroke="#999" stroke-width="1"/>
<line x1="52" y1="592.5" x2="56" y2="592.5" stroke="#999" stroke-width="1"/>
<line x1="52" y1="598.5" x2="56" y2="598.5" stroke="#999" stroke-width="1"/>
<line x1="37" y1="604.5" x2="56" y2="604.5" stroke="#808080" stroke-width="1"/>
<text transform="translate(48,607.5) rotate(-90) scale(0.9,1)" text-anchor="end" font-size="11" fill="#333" font-family="Liberation Sans">160</text>
<line x1="52" y1="609.5" x2="56" y2="609.5" stroke="#999" stroke-width="1"/>
<line x1="52" y1="615.5" x2="56" y2="615.5" stroke="#999" stroke-width="1"/>
<line x1="52" y1="620.5" x2="56" y2="620.5" stroke="#999" stroke-width="1"/>
<line x1="52" y1="626.5" x2="56" y2="626.5" stroke="#999" stroke-width="1"/>
<line x1="49" y1="632.5" x2="56" y2="632.5" stroke="#8a8a8a" stroke-width="1"/>
<line x1="52" y1="637.5" x2="56" y2="637.5" stroke="#999" stroke-width="1"/>
<line x1="52" y1="643.5" x2="56" y2="643.5" stroke="#999" stroke-width="1"/>
<line x1="52" y1="649.5" x2="56" y2="649.5" stroke="#999" stroke-width="1"/>
<line x1="52" y1="654.5" x2="56" y2="654.5" stroke="#999" stroke-width="1"/>
<line x1="37" y1="660.5" x2="56" y2="660.5" stroke="#808080" stroke-width="1"/>
<text transform="translate(48,663.5) rotate(-90) scale(0.9,1)" text-anchor="end" font-size="11" fill="#333" font-family="Liberation Sans">180</text>
<line x1="52" y1="666.5" x2="56" y2="666.5" stroke="#999" stroke-width="1"/>
<line x1="52" y1="671.5" x2="56" y2="671.5" stroke="#999" stroke-width="1"/>
<line x1="52" y1="677.5" x2="56" y2="677.5" stroke="#999" stroke-width="1"/>
<line x1="52" y1="683.5" x2="56" y2="683.5" stroke="#999" stroke-width="1"/>
<line x1="49" y1="688.5" x2="56" y2="688.5" stroke="#8a8a8a" stroke-width="1"/>
<line x1="52" y1="694.5" x2="56" y2="694.5" stroke="#999" stroke-width="1"/>
<line x1="52" y1="700.5" x2="56" y2="700.5" stroke="#999" stroke-width="1"/>
<line x1="52" y1="705.5" x2="56" y2="705.5" stroke="#999" stroke-width="1"/>
<line x1="52" y1="711.5" x2="56" y2="711.5" stroke="#999" stroke-width="1"/>
<line x1="37" y1="717.5" x2="56" y2="717.5" stroke="#808080" stroke-width="1"/>
<text transform="translate(48,720.5) rotate(-90) scale(0.9,1)" text-anchor="end" font-size="11" fill="#333" font-family="Liberation Sans">200</text>
<line x1="52" y1="722.5" x2="56" y2="722.5" stroke="#999" stroke-width="1"/>
<line x1="52" y1="728.5" x2="56" y2="728.5" stroke="#999" stroke-width="1"/>
<line x1="52" y1="734.5" x2="56" y2="734.5" stroke="#999" stroke-width="1"/>
<line x1="52" y1="739.5" x2="56" y2="739.5" stroke="#999" stroke-width="1"/>
<line x1="49" y1="745.5" x2="56" y2="745.5" stroke="#8a8a8a" stroke-width="1"/>
<line x1="52" y1="751.5" x2="56" y2="751.5" stroke="#999" stroke-width="1"/>
<line x1="52" y1="756.5" x2="56" y2="756.5" stroke="#999" stroke-width="1"/>
<line x1="52" y1="762.5" x2="56" y2="762.5" stroke="#999" stroke-width="1"/>
<line x1="52" y1="768.5" x2="56" y2="768.5" stroke="#999" stroke-width="1"/>
<line x1="554.5" y1="120" x2="554.5" y2="139" stroke="#d04040" stroke-width="1"/>
<line x1="37" y1="384.5" x2="56" y2="384.5" stroke="#d04040" stroke-width="1"/>
</svg>
<div class="a" style="left:56px;top:139px;width:879px;height:619px;background:#d6d6d6;overflow:hidden">
  <div class="a" style="left:25px;top:18px;width:841px;height:595px;background:#979797"></div>
  <div class="a" style="left:19px;top:11px;width:841px;height:595px;background:#fff"></div>
</div>
<svg style="left:0;top:0" width="1200" height="793" viewBox="0 0 1200 793">
<defs><clipPath id="mc"><rect x="90" y="188" width="787" height="371.5"/></clipPath></defs>
<g clip-path="url(#mc)">
<rect x="80" y="180" width="810" height="400" fill="#440154"/>
<polygon fill="#35b779" stroke="#10201c" stroke-width="1.1" stroke-linejoin="round" points="380,180 890,180 890,400 600,400 550,330 549.6,328.2 547.75,323.6 543.2,320 538.6,318 536.75,314.4 541.3,310.75 555.1,308.9 561.5,304.3 563,298.8 559.7,293.3 558.75,287.8 563.3,281.4 570.7,275 575.3,272.25 580.2,268.6 578.9,254.8 574.3,255.75 535.8,240.2 520.2,229.2 473.1,285 474.4,288.75 460.7,297 443.2,272.2 401.1,299.2 384,274 345.8,299.5 265,299.7 323.5,257.3 329.2,261.7 384.1,182"/>
<polygon fill="#fde725" stroke="#20201a" stroke-width="1.1" points="228.1,180 385.5,180 329.2,261.7"/>
<polygon fill="#31688e" stroke="#0c2a28" stroke-width="1.1" stroke-linejoin="round" points="890,246 890,570 410.6,570 410.6,559.5 408.9,547.7 405.3,537.1 398.3,524.7 393,521.2 388.6,512.4 382.4,503.6 375.3,493 373.5,482.4 372.7,475.3 376.2,468.2 384.1,464.7 403.6,464.7 414.2,459.4 424.7,450.6 435.3,440 440,435 444.2,425 445.8,414.2 453.3,401.7 463.3,391.7 473.3,385 486.7,378.3 503.3,374.2 520,370 534.2,372.5 540,370 546.7,363.3 549.2,356.7 549.2,340.3 549.2,327.5 558.3,320.5 580.3,321.1 593.2,333 602.3,347.7 613.3,364.2 620.7,373.3 625.25,385.25 633.5,391.7 643.6,393.9 650,388 655.5,375.2 658.25,355 662.8,345.8 672,338.5 692.2,333 702.25,332.1 716,334.8 728.8,337.6 738,342.2 749,343.1 756.4,340.7 776,340.2 802.3,332.5 815.4,331.6 831.8,323.4 846.6,308.7 861.3,302.1 865.9,295.6 865.4,282.5 861.3,269.3 858.9,259.5 861.3,251.3 866.2,248 877,246"/>
</g>
<rect x="90.5" y="188.5" width="790" height="520" fill="none" stroke="#6f6a80" stroke-width="1" stroke-dasharray="2,1"/>
<rect x="90.5" y="189.5" width="5" height="5" fill="#fff" stroke="#9ab" stroke-width="0.7"/><rect x="483.5" y="189.5" width="5" height="5" fill="#fff" stroke="#9ab" stroke-width="0.7"/><rect x="874.5" y="189.5" width="5" height="5" fill="#fff" stroke="#9ab" stroke-width="0.7"/><rect x="90.5" y="446" width="5" height="5" fill="#fff" stroke="#9ab" stroke-width="0.7"/><rect x="874.5" y="446" width="5" height="5" fill="#fff" stroke="#9ab" stroke-width="0.7"/><rect x="90.5" y="703" width="5" height="5" fill="#fff" stroke="#9ab" stroke-width="0.7"/><rect x="483.5" y="703" width="5" height="5" fill="#fff" stroke="#9ab" stroke-width="0.7"/><rect x="874.5" y="703" width="5" height="5" fill="#fff" stroke="#9ab" stroke-width="0.7"/>
</svg>
<div class="a" style="left:935px;top:139px;width:14px;height:619px;background:#fff"></div>
<div class="a" style="left:935px;top:152px;width:13px;height:27px;background:#e2e2e2"></div>
<div class="a" style="left:935px;top:718px;width:13px;height:26px;background:#e2e2e2"></div>
<svg style="left:937px;top:141px" width="10" height="8" viewBox="0 0 10 8"><path d="M1 6 L5 2 L9 6 Z" fill="#555"/></svg>
<svg style="left:937px;top:746px" width="10" height="8" viewBox="0 0 10 8"><path d="M1 2 L5 6 L9 2 Z" fill="#555"/></svg>
<div class="a" style="left:56px;top:758px;width:879px;height:14px;background:#fff"></div>
<div class="a" style="left:69px;top:758px;width:23px;height:13px;background:#e2e2e2"></div>
<div class="a" style="left:899px;top:758px;width:21px;height:13px;background:#e6e6e6"></div>
<svg style="left:59px;top:760px" width="8" height="10" viewBox="0 0 8 10"><path d="M6 1 L2 5 L6 9 Z" fill="#555"/></svg>
<svg style="left:924px;top:760px" width="8" height="10" viewBox="0 0 8 10"><path d="M2 1 L6 5 L2 9 Z" fill="#555"/></svg>
<div class="a" style="left:935px;top:758px;width:14px;height:14px;background:#f0f0f0"></div>
<div class="a" style="left:949px;top:119px;width:250px;height:653px;background:#f0f0f0"></div>
<div class="a" style="left:955px;top:143px;width:243px;height:1px;background:#d6d6d6"></div>
<div class="a" style="left:1006px;top:121px;width:85px;height:22px;background:#e3e3e3;border:1px solid #d4d4d4;border-bottom:none"></div>
<div class="a" style="left:955px;top:120px;width:52px;height:24px;background:#f9f9f9;border:1px solid #d4d4d4;border-bottom:none"></div>
<div class="t" style="left:967px;top:127px;font-size:12px;color:#111;transform:scaleX(0.913)">Items</div>
<div class="t" style="left:1018px;top:128px;font-size:12px;color:#111;transform:scaleX(0.885)">Undo History</div>
<div class="t" style="left:957px;top:148px;font-size:12px;color:#222;transform:scaleX(0.988)">Items</div>
<svg style="left:1183px;top:148px" width="16" height="8" viewBox="0 0 16 8"><rect x="0.5" y="0.5" width="7" height="7" rx="1.5" fill="#d8d8d8" stroke="#aaa" stroke-width="0.6"/><rect x="8.5" y="0.5" width="7" height="7" rx="1.5" fill="#d8d8d8" stroke="#aaa" stroke-width="0.6"/><path d="M10.5 2.5l3 3M13.5 2.5l-3 3" stroke="#555" stroke-width="0.8"/><rect x="2" y="2" width="3.5" height="3.5" fill="none" stroke="#777" stroke-width="0.6"/></svg>
<div class="a" style="left:955px;top:159px;width:243px;height:72px;background:#fff;border:1px solid #cfcfcf"></div>
<div class="a" style="left:956px;top:160px;width:241px;height:19px;background:linear-gradient(#fdfdfd,#ededed);border-bottom:1px solid #d0d0d0"></div>
<div class="a" style="left:990px;top:160px;width:1px;height:19px;background:#d8d8d8"></div>
<div class="a" style="left:1025px;top:160px;width:1px;height:19px;background:#d8d8d8"></div>
<svg style="left:957px;top:164px" width="17" height="12" viewBox="0 0 17 12"><path d="M1 6q7.5-7 15 0q-7.5 7-15 0z" fill="none" stroke="#777" stroke-width="1.1"/><circle cx="8.5" cy="5.8" r="2.8" fill="none" stroke="#777" stroke-width="1.1"/><circle cx="8.5" cy="5.8" r="1.3" fill="#333"/></svg>
<svg style="left:994px;top:163px" width="13" height="16" viewBox="0 0 13 16"><path d="M3 8V5a3.5 3.5 0 0 1 7 0v3" fill="none" stroke="#777" stroke-width="1.6"/><rect x="0.5" y="7" width="12" height="8" rx="1.2" fill="#6e6e6e"/></svg>
<div class="t" style="left:1029px;top:164px;font-size:12px;color:#111;transform:scaleX(0.925)">Item</div>
<div class="a" style="left:957px;top:182px;width:14px;height:14px;background:#fff;border:1px solid #d4d4d4"></div>
<svg style="left:958px;top:183px" width="12" height="12" viewBox="0 0 12 12"><path d="M2 6l3 4.5 5-9" fill="none" stroke="#000" stroke-width="1.8"/></svg>
<div class="a" style="left:992px;top:182px;width:14px;height:14px;background:#fff;border:1px solid #d4d4d4"></div>
<svg style="left:1028px;top:182px" width="16" height="14" viewBox="0 0 16 14"><rect x="0.5" y="0.5" width="15" height="13" rx="1" fill="#e2e2e2" stroke="#999" stroke-width="0.8"/><rect x="4" y="1" width="11" height="12" fill="url(#mg)"/><defs><linearGradient id="mg" x1="0" x2="1"><stop offset="0" stop-color="#bdbdbd"/><stop offset="1" stop-color="#f4f4f4"/></linearGradient></defs><path d="M3.5 1v12" stroke="#999" stroke-width="0.7"/></svg>
<div class="t" style="left:1047px;top:183px;font-size:13px;font-weight:bold;color:#111;transform:scaleX(0.950)">Map 1</div>
<div class="a" style="left:955px;top:260px;width:243px;height:1px;background:#d6d6d6"></div>
<div class="a" style="left:955px;top:238px;width:52px;height:22px;background:#e3e3e3;border:1px solid #d4d4d4;border-bottom:none"></div>
<div class="a" style="left:1103px;top:238px;width:52px;height:22px;background:#e3e3e3;border:1px solid #d4d4d4;border-bottom:none"></div>
<div class="a" style="left:1155px;top:238px;width:43px;height:22px;background:#e3e3e3;border:1px solid #d4d4d4;border-bottom:none"></div>
<div class="a" style="left:1007px;top:236px;width:96px;height:25px;background:#f9f9f9;border:1px solid #d4d4d4;border-bottom:none"></div>
<div class="t" style="left:968px;top:244px;font-size:12px;color:#111;transform:scaleX(0.836)">Lay...</div>
<div class="t" style="left:1019px;top:243px;font-size:12px;color:#111;transform:scaleX(0.908)">Item Propert...</div>
<div class="t" style="left:1116px;top:244px;font-size:12px;color:#111;transform:scaleX(0.837)">Gui...</div>
<div class="t" style="left:1167px;top:244px;font-size:12px;color:#111;transform:scaleX(0.876)">At...</div>
<div class="t" style="left:957px;top:264px;font-size:12px;color:#222;transform:scaleX(1.000)">Item Properties</div>
<svg style="left:1183px;top:264px" width="16" height="8" viewBox="0 0 16 8"><rect x="0.5" y="0.5" width="7" height="7" rx="1.5" fill="#d8d8d8" stroke="#aaa" stroke-width="0.6"/><rect x="8.5" y="0.5" width="7" height="7" rx="1.5" fill="#d8d8d8" stroke="#aaa" stroke-width="0.6"/><path d="M10.5 2.5l3 3M13.5 2.5l-3 3" stroke="#555" stroke-width="0.8"/><rect x="2" y="2" width="3.5" height="3.5" fill="none" stroke="#777" stroke-width="0.6"/></svg>
<div class="a" style="left:955px;top:276px;width:243px;height:14px;background:#c8c8c8"></div>
<div class="t" style="left:959px;top:278px;font-size:12px;font-weight:bold;color:#111;transform:scaleX(0.935)">Map 1</div>
<svg style="left:961px;top:296px" width="16" height="16" viewBox="0 0 16 16"><path d="M2.5 8.5A5.5 5.5 0 0 1 12 4.5" stroke="#4a8fd0" stroke-width="2.8" fill="none"/><path d="M15 1v7L9 6.5z" fill="#4a8fd0"/><path d="M13.5 7.5A5.5 5.5 0 0 1 4 11.5" stroke="#3b7cc4" stroke-width="2.8" fill="none"/><path d="M1 15V8l6 1.5z" fill="#3b7cc4"/></svg>
<svg style="left:989px;top:296px" width="16" height="16" viewBox="0 0 16 16"><rect x="1.5" y="3.5" width="13" height="12" fill="#e4e4e4" stroke="#8a8a8a"/><rect x="3" y="5" width="10" height="9" fill="#f2f2f2"/><path d="M2 15l12-10" stroke="#999" stroke-width="0.6"/><path d="M3.5 3a3.5 3.5 0 0 1 6.5 1.5v4.5h2.5l-4 4.5-4-4.5h2.5v-4a1.2 1.2 0 0 0-2.5-.5z" fill="#e8782a" stroke="#c85a10" stroke-width="0.5"/></svg>
<svg style="left:1011px;top:296px" width="16" height="16" viewBox="0 0 16 16"><rect x="1.5" y="3.5" width="13" height="12" fill="#e4e4e4" stroke="#8a8a8a"/><rect x="3" y="5" width="10" height="9" fill="#f2f2f2"/><path d="M2 15l12-10" stroke="#999" stroke-width="0.6"/><path d="M4 14v-5a4 4 0 0 1 4-4h3v-2.5l4.5 4-4.5 4v-2.5h-2.5a1.5 1.5 0 0 0-1.5 1.5v4.5z" fill="#e8782a" stroke="#c85a10" stroke-width="0.5"/></svg>
<div class="a" style="left:1032px;top:298px;width:1px;height:13px;background:#dcdcdc"></div>
<svg style="left:1038px;top:296px" width="16" height="16" viewBox="0 0 16 16"><rect x="1.5" y="3.5" width="13" height="12" fill="#e4e4e4" stroke="#8a8a8a"/><rect x="3" y="5" width="10" height="9" fill="#f2f2f2"/><path d="M2 15l12-10" stroke="#999" stroke-width="0.6"/><path d="M3.5 3a3.5 3.5 0 0 1 6.5 1.5v4.5h2.5l-4 4.5-4-4.5h2.5v-4a1.2 1.2 0 0 0-2.5-.5z" fill="#e8782a" stroke="#c85a10" stroke-width="0.5"/></svg>
<svg style="left:1061px;top:296px" width="16" height="16" viewBox="0 0 16 16"><rect x="1.5" y="3.5" width="13" height="12" fill="#e4e4e4" stroke="#8a8a8a"/><rect x="3" y="5" width="10" height="9" fill="#f2f2f2"/><path d="M2 15l12-10" stroke="#999" stroke-width="0.6"/><path d="M4 14v-5a4 4 0 0 1 4-4h3v-2.5l4.5 4-4.5 4v-2.5h-2.5a1.5 1.5 0 0 0-1.5 1.5v4.5z" fill="#e8782a" stroke="#c85a10" stroke-width="0.5"/></svg>
<svg style="left:1089px;top:296px" width="16" height="16" viewBox="0 0 16 16"><rect x="1.5" y="2.5" width="11" height="12" fill="#eee" stroke="#aaa"/><rect x="7" y="0" width="3" height="8" rx="1.5" fill="#7aa4d0" stroke="#4a78a8" stroke-width="0.6"/><path d="M6 11h10l-5 5z" fill="#333"/></svg>
<svg style="left:1111px;top:297px" width="15" height="15" viewBox="0 0 15 15"><rect x="0.5" y="0.5" width="14" height="14" fill="#f4f4f4" stroke="#aaa"/><path d="M7.5 1l3 3h-6zM1 7.5l3-3v6zM14 7.5l-3 3v-6zM7.5 14l-3-3h6z" fill="#5b8cc8"/><rect x="6" y="6" width="3" height="3" fill="#5b8cc8"/></svg>
<div class="a" style="left:1131px;top:298px;width:1px;height:13px;background:#dcdcdc"></div>
<svg style="left:1138px;top:299px" width="16" height="10" viewBox="0 0 16 10"><path d="M0.5 5l4-4.5h11v9h-11z" fill="#f6e05a" stroke="#c9a420" stroke-width="0.8"/><text x="9.5" y="7.5" text-anchor="middle" font-size="6.5" font-family="Liberation Sans" fill="#333">abc</text></svg>
<div class="a" style="left:955px;top:318px;width:243px;height:454px;background:#f0f0f0;border-left:1px solid #dadada;border-top:1px solid #dadada"></div>
<div class="a" style="left:1184px;top:319px;width:14px;height:453px;background:#e6e6e6"></div>
<div class="a" style="left:1184px;top:319px;width:14px;height:12px;background:#fff"></div>
<div class="a" style="left:1185px;top:331px;width:12px;height:227px;background:#fff"></div>
<div class="a" style="left:1184px;top:758px;width:14px;height:14px;background:#fff"></div>
<svg style="left:1186px;top:322px" width="10" height="6" viewBox="0 0 10 6"><path d="M0 6L5 1l5 5z" fill="#555"/></svg>
<svg style="left:1186px;top:762px" width="10" height="6" viewBox="0 0 10 6"><path d="M0 0l5 5 5-5z" fill="#555"/></svg>
<svg style="left:962px;top:329px" width="8" height="6" viewBox="0 0 8 6"><path d="M0.5 1h7L4 5z" fill="#333"/></svg>
<div class="t" style="left:973px;top:326px;font-size:12px;font-weight:bold;color:#111;transform:scaleX(0.922)">Main Properties</div>
<div class="a" style="left:961px;top:341px;width:218px;height:102px;background:#ececec;border:1px solid #e2e2e2;border-radius:2px"></div>
<div class="t" style="left:968px;top:353px;font-size:12px;color:#222;transform:scaleX(0.826)">Scale</div>
<div class="a" style="left:1031px;top:350px;width:112px;height:17px;background:#fff;border:1px solid #d2d2d2;border-radius:2px"></div>
<div class="t" style="left:1033px;top:353px;font-size:12px;color:#111;transform:scaleX(0.821)">15000</div>
<svg style="left:1148px;top:351px" width="24" height="17" viewBox="0 0 24 17"><path d="M0.5 7.5l5-5v10z" fill="#888"/><rect x="5.5" y="1.5" width="11" height="13" rx="1" fill="#fdfdfd" stroke="#777" stroke-width="1.2"/><path d="M8 5h6" stroke="#333" stroke-width="1.4"/><path d="M8 10h6" stroke="#999" stroke-width="1.4"/><path d="M16 13.5h7l-3.5 3.5z" fill="#333"/></svg>
<div class="t" style="left:968px;top:378px;font-size:12px;color:#222;transform:scaleX(0.888)">Map rotation</div>
<div class="a" style="left:1031px;top:373px;width:112px;height:20px;background:#fff;border:1px solid #d2d2d2;border-radius:2px"></div>
<div class="t" style="left:1033px;top:376px;font-size:12px;color:#111;transform:scaleX(0.883)">0.00 °</div>
<div class="a" style="left:1129px;top:375px;width:1px;height:17px;background:#e6e6e6"></div>
<svg style="left:1131px;top:376px" width="10" height="15" viewBox="0 0 10 15"><path d="M1 6l4-4 4 4z" fill="#555"/><path d="M1 9l4 4 4-4z" fill="#555"/></svg>
<svg style="left:1148px;top:376px" width="24" height="17" viewBox="0 0 24 17"><path d="M0.5 7.5l5-5v10z" fill="#888"/><rect x="5.5" y="1.5" width="11" height="13" rx="1" fill="#fdfdfd" stroke="#777" stroke-width="1.2"/><path d="M8 5h6" stroke="#333" stroke-width="1.4"/><path d="M8 10h6" stroke="#999" stroke-width="1.4"/><path d="M16 13.5h7l-3.5 3.5z" fill="#333"/></svg>
<div class="t" style="left:968px;top:402px;font-size:12px;color:#222;transform:scaleX(0.769)">CRS</div>
<div class="a" style="left:1031px;top:399px;width:117px;height:19px;background:linear-gradient(#fbfbfb,#f2f2f2);border:1px solid #d2d2d2;border-radius:2px"></div>
<div class="t" style="left:1033px;top:403px;font-size:12px;color:#111;transform:scaleX(0.850)">Use project CRS</div>
<svg style="left:1131px;top:405px" width="10" height="6" viewBox="0 0 10 6"><path d="M0.5 0.5h9L5 5z" fill="#444"/></svg>
<div class="a" style="left:1151px;top:399px;width:21px;height:19px;background:#f6f6f6;border:1px solid #d2d2d2;border-radius:2px"></div>
<svg style="left:1153px;top:401px" width="17" height="16" viewBox="0 0 17 16"><path d="M2 9a6.5 6.5 0 0 1 13 0z" fill="#ddd" stroke="#777" stroke-width="0.8"/><circle cx="8.5" cy="9" r="6" fill="#b8d4ee" stroke="#777" stroke-width="0.8"/><path d="M2.5 9h12M8.5 3v12M4 5.5h9M4 12.5h9" stroke="#777" stroke-width="0.6"/><rect x="9" y="9" width="7" height="7" fill="#c9a420"/><path d="M10.5 14.5l4-4" stroke="#fff" stroke-width="1.2"/></svg>
<div class="a" style="left:968px;top:421px;width:14px;height:14px;background:#fff;border:1px solid #cfcfcf"></div>
<svg style="left:969px;top:422px" width="12" height="12" viewBox="0 0 12 12"><path d="M2 6l3 4.5 5-9" fill="none" stroke="#000" stroke-width="1.8"/></svg>
<div class="t" style="left:988px;top:424px;font-size:12px;color:#222;transform:scaleX(0.885)">Draw map canvas items</div>
<svg style="left:962px;top:451px" width="8" height="6" viewBox="0 0 8 6"><path d="M0.5 1h7L4 5z" fill="#333"/></svg>
<div class="t" style="left:973px;top:448px;font-size:12px;font-weight:bold;color:#111;transform:scaleX(0.878)">Layers</div>
<div class="a" style="left:961px;top:462px;width:218px;height:81px;background:#ececec;border:1px solid #e2e2e2;border-radius:2px"></div>
<div class="a" style="left:968px;top:473px;width:14px;height:14px;background:#fff;border:1px solid #cfcfcf"></div>
<div class="t" style="left:988px;top:475px;font-size:12px;color:#222;transform:scaleX(0.892)">Follow map theme</div>
<div class="a" style="left:1081px;top:472px;width:62px;height:17px;background:linear-gradient(#fbfbfb,#f2f2f2);border:1px solid #d2d2d2;border-radius:2px"></div>
<div class="t" style="left:1084px;top:475px;font-size:12px;color:#111;transform:scaleX(0.905)">(none)</div>
<svg style="left:1128px;top:477px" width="10" height="6" viewBox="0 0 10 6"><path d="M0.5 0.5h9L5 5z" fill="#444"/></svg>
<svg style="left:1148px;top:473px" width="24" height="17" viewBox="0 0 24 17"><path d="M0.5 7.5l5-5v10z" fill="#888"/><rect x="5.5" y="1.5" width="11" height="13" rx="1" fill="#fdfdfd" stroke="#777" stroke-width="1.2"/><path d="M8 5h6" stroke="#333" stroke-width="1.4"/><path d="M8 10h6" stroke="#999" stroke-width="1.4"/><path d="M16 13.5h7l-3.5 3.5z" fill="#333"/></svg>
<div class="a" style="left:968px;top:498px;width:14px;height:14px;background:#fff;border:1px solid #cfcfcf"></div>
<div class="t" style="left:988px;top:500px;font-size:12px;color:#222;transform:scaleX(0.850)">Lock layers</div>
<div class="a" style="left:1123px;top:496px;width:20px;height:19px;background:#f6f6f6;border:1px solid #d6d6d6;border-radius:2px"></div>
<svg style="left:1125px;top:500px" width="17" height="12" viewBox="0 0 17 12"><path d="M1 5q7-7 14 0q-7 7-14 0z" fill="#b8cce0" stroke="#555" stroke-width="1"/><circle cx="8" cy="5" r="2.6" fill="#3b6ea6"/><path d="M10 8h6l-3 3z" fill="#333"/></svg>
<svg style="left:1148px;top:498px" width="24" height="17" viewBox="0 0 24 17"><path d="M0.5 7.5l5-5v10z" fill="#888"/><rect x="5.5" y="1.5" width="11" height="13" rx="1" fill="#fdfdfd" stroke="#777" stroke-width="1.2"/><path d="M8 5h6" stroke="#333" stroke-width="1.4"/><path d="M8 10h6" stroke="#999" stroke-width="1.4"/><path d="M16 13.5h7l-3.5 3.5z" fill="#333"/></svg>
<div class="a" style="left:968px;top:520px;width:14px;height:14px;background:#f4f4f4;border:1px solid #dedede"></div>
<div class="t" style="left:988px;top:522px;font-size:12px;color:#8a8a8a;transform:scaleX(0.875)">Lock styles for layers</div>
<svg style="left:962px;top:551px" width="8" height="6" viewBox="0 0 8 6"><path d="M0.5 1h7L4 5z" fill="#333"/></svg>
<div class="t" style="left:973px;top:548px;font-size:12px;font-weight:bold;color:#111;transform:scaleX(0.916)">Extents</div>
<div class="a" style="left:961px;top:563px;width:218px;height:111px;background:#ececec;border:1px solid #e2e2e2;border-radius:2px"></div>
<div class="t" style="left:968px;top:575px;font-size:12px;color:#222;transform:scaleX(0.873)">X min</div>
<div class="a" style="left:1000px;top:571px;width:143px;height:17px;background:#fff;border:1px solid #d2d2d2;border-radius:2px"></div>
<div class="t" style="left:1002px;top:574px;font-size:12px;color:#111;transform:scaleX(0.842)">653028.294</div>
<svg style="left:1148px;top:573px" width="24" height="17" viewBox="0 0 24 17"><path d="M0.5 7.5l5-5v10z" fill="#888"/><rect x="5.5" y="1.5" width="11" height="13" rx="1" fill="#fdfdfd" stroke="#777" stroke-width="1.2"/><path d="M8 5h6" stroke="#333" stroke-width="1.4"/><path d="M8 10h6" stroke="#999" stroke-width="1.4"/><path d="M16 13.5h7l-3.5 3.5z" fill="#333"/></svg>
<div class="t" style="left:968px;top:600px;font-size:12px;color:#222;transform:scaleX(0.880)">Y min</div>
<div class="a" style="left:1000px;top:596px;width:143px;height:17px;background:#fff;border:1px solid #d2d2d2;border-radius:2px"></div>
<div class="t" style="left:1002px;top:599px;font-size:12px;color:#111;transform:scaleX(0.842)">475708.824</div>
<svg style="left:1148px;top:598px" width="24" height="17" viewBox="0 0 24 17"><path d="M0.5 7.5l5-5v10z" fill="#888"/><rect x="5.5" y="1.5" width="11" height="13" rx="1" fill="#fdfdfd" stroke="#777" stroke-width="1.2"/><path d="M8 5h6" stroke="#333" stroke-width="1.4"/><path d="M8 10h6" stroke="#999" stroke-width="1.4"/><path d="M16 13.5h7l-3.5 3.5z" fill="#333"/></svg>
<div class="t" style="left:968px;top:625px;font-size:12px;color:#222;transform:scaleX(0.838)">X max</div>
<div class="a" style="left:1000px;top:621px;width:143px;height:17px;background:#fff;border:1px solid #d2d2d2;border-radius:2px"></div>
<div class="t" style="left:1002px;top:624px;font-size:12px;color:#111;transform:scaleX(0.826)">657216.282</div>
<svg style="left:1148px;top:623px" width="24" height="17" viewBox="0 0 24 17"><path d="M0.5 7.5l5-5v10z" fill="#888"/><rect x="5.5" y="1.5" width="11" height="13" rx="1" fill="#fdfdfd" stroke="#777" stroke-width="1.2"/><path d="M8 5h6" stroke="#333" stroke-width="1.4"/><path d="M8 10h6" stroke="#999" stroke-width="1.4"/><path d="M16 13.5h7l-3.5 3.5z" fill="#333"/></svg>
<div class="t" style="left:968px;top:651px;font-size:12px;color:#222;transform:scaleX(0.843)">Y max</div>
<div class="a" style="left:1000px;top:647px;width:143px;height:17px;background:#fff;border:1px solid #d2d2d2;border-radius:2px"></div>
<div class="t" style="left:1002px;top:650px;font-size:12px;color:#111;transform:scaleX(0.826)">478461.232</div>
<svg style="left:1148px;top:649px" width="24" height="17" viewBox="0 0 24 17"><path d="M0.5 7.5l5-5v10z" fill="#888"/><rect x="5.5" y="1.5" width="11" height="13" rx="1" fill="#fdfdfd" stroke="#777" stroke-width="1.2"/><path d="M8 5h6" stroke="#333" stroke-width="1.4"/><path d="M8 10h6" stroke="#999" stroke-width="1.4"/><path d="M16 13.5h7l-3.5 3.5z" fill="#333"/></svg>
<svg style="left:963px;top:681px" width="6" height="8" viewBox="0 0 6 8"><path d="M1 0.5v7L5 4z" fill="#aaa"/></svg>
<div class="a" style="left:971px;top:677px;width:14px;height:14px;background:#f4f4f4;border:1px solid #dedede"></div>
<div class="t" style="left:993px;top:679px;font-size:12px;font-weight:bold;color:#8a8a8a;transform:scaleX(0.913)">Controlled by Atlas</div>
<svg style="left:963px;top:697px" width="6" height="8" viewBox="0 0 6 8"><path d="M1 0.5v7L5 4z" fill="#333"/></svg>
<div class="t" style="left:973px;top:695px;font-size:12px;font-weight:bold;color:#111;transform:scaleX(0.852)">Grids</div>
<svg style="left:963px;top:713px" width="6" height="8" viewBox="0 0 6 8"><path d="M1 0.5v7L5 4z" fill="#333"/></svg>
<div class="t" style="left:973px;top:711px;font-size:12px;font-weight:bold;color:#111;transform:scaleX(0.899)">Overviews</div>
<svg style="left:963px;top:728px" width="6" height="8" viewBox="0 0 6 8"><path d="M1 0.5v7L5 4z" fill="#333"/></svg>
<div class="t" style="left:973px;top:726px;font-size:12px;font-weight:bold;color:#111;transform:scaleX(0.896)">Position and Size</div>
<svg style="left:963px;top:750px" width="6" height="8" viewBox="0 0 6 8"><path d="M1 0.5v7L5 4z" fill="#333"/></svg>
<div class="t" style="left:973px;top:748px;font-size:12px;font-weight:bold;color:#111;transform:scaleX(0.925)">Rotation</div>
<div class="a" style="left:971px;top:768px;width:14px;height:5px;background:#fff;border:1px solid #dedede;border-bottom:none"></div>
<svg style="left:9px;top:134px" width="22" height="25" viewBox="0 0 22 25"><path d="M6 23q-2-4-4.5-8-1.5-2 .5-3 1.5-.5 3 1.5l1.5 2V4q0-2 1.6-2t1.6 2v7V2.5q0-2 1.6-2t1.6 2V11V3.5q0-2 1.6-2t1.6 2V12V6q0-1.8 1.5-1.8T19 6v10q0 4-2 7z" fill="#fff" stroke="#111" stroke-width="1.3" stroke-linejoin="round"/></svg>
<svg style="left:6px;top:163px" width="26" height="25" viewBox="0 0 26 25"><path d="M2 2h9M2 2v11M2 13h4" stroke="#222" stroke-width="1.3" stroke-dasharray="1.5,1.5" fill="none"/><circle cx="16" cy="9" r="8" fill="#e6e6e6" stroke="#666" stroke-width="1.2"/><path d="M10 15l-7 7" stroke="#333" stroke-width="3.6"/><path d="M9.5 15.5l-6 6" stroke="#e8d86a" stroke-width="2"/></svg>
<svg style="left:9px;top:194px" width="20" height="23" viewBox="0 0 20 23"><g fill="none" stroke="#444" stroke-width="1"><rect x="0.5" y="0.5" width="3" height="3"/><rect x="15.5" y="0.5" width="3" height="3"/><rect x="0.5" y="15.5" width="3" height="3"/><rect x="15.5" y="15.5" width="3" height="3"/></g><path d="M4 2v18l4.5-4.5 3.5 7 3-1.5-3.5-7H18z" fill="#fff" stroke="#111" stroke-width="1.3" stroke-linejoin="round"/></svg>
<div class="a" style="left:5px;top:219px;width:29px;height:28px;background:#e1e1e1;border:1px solid #d2d2d2;border-radius:2px"></div>
<svg style="left:9px;top:222px" width="22" height="22" viewBox="0 0 22 22"><path d="M3.5 2.5h15v16h-15z" fill="#f2f2f2" stroke="#999"/><path d="M3.5 2.5q-2 0-2 2v15q0 2 2 2h12" fill="#ddd" stroke="#999"/><path d="M5 3v15" stroke="#bbb"/><path d="M12 3l4.5 4.5h-3v3h-3v-3h-3z" fill="#5b8cc8" stroke="#3c6a9c" stroke-width="0.5"/><path d="M6 11v6M18 11v6M10 19h4" stroke="#5b8cc8" stroke-width="2.4"/><rect x="9" y="12" width="6" height="5" fill="#fff" opacity="0.6"/></svg>
<svg style="left:8px;top:250px" width="23" height="24" viewBox="0 0 23 24"><path d="M6 3L2 20 18 11z" fill="none" stroke="#111" stroke-width="1.2"/><circle cx="6" cy="3" r="2.4" fill="#2f7de0"/><circle cx="2.8" cy="20" r="2.4" fill="#2f7de0"/><circle cx="18" cy="11" r="2.4" fill="#2f7de0"/><path d="M9 21l10-10" stroke="#e8cf3a" stroke-width="2.4"/><path d="M14 16l6 6" stroke="#b8860b" stroke-width="2.4"/></svg>
<svg style="left:8px;top:278px" width="24" height="24" viewBox="0 0 24 24"><path d="M3.5 2.5h15v16h-15z" fill="#e8e8e8" stroke="#999"/><path d="M3.5 2.5q-2 0-2 2v15q0 2 2 2h12" fill="#ddd" stroke="#999"/><path d="M5 3v15" stroke="#bbb"/><rect x="14.5" y="14.5" width="9" height="9" rx="2" fill="#5d9b5d" stroke="#3f7d3f" stroke-width="0.7"/><path d="M19 16v6M16 19h6" stroke="#fff" stroke-width="2"/></svg>
<svg style="left:7px;top:310px" width="24" height="24" viewBox="0 0 24 24"><path d="M2 15l5-12 13 1-2 13z" fill="#ececec" stroke="#999" stroke-width="0.9"/><path d="M5 9l12 1M10 3.5l-2 13M15 4l-1 13" stroke="#bbb" stroke-width="0.7"/><rect x="14.5" y="14.5" width="9" height="9" rx="2" fill="#5d9b5d" stroke="#3f7d3f" stroke-width="0.7"/><path d="M19 16v6M16 19h6" stroke="#fff" stroke-width="2"/></svg>
<svg style="left:8px;top:340px" width="24" height="24" viewBox="0 0 24 24"><rect x="1.5" y="2.5" width="17" height="12" fill="#4aa3e0"/><path d="M1.5 10l8-4 9 3v7h-17z" fill="#c9a43a"/><rect x="14.5" y="14.5" width="9" height="9" rx="2" fill="#5d9b5d" stroke="#3f7d3f" stroke-width="0.7"/><path d="M19 16v6M16 19h6" stroke="#fff" stroke-width="2"/></svg>
<svg style="left:8px;top:369px" width="24" height="24" viewBox="0 0 24 24"><rect x="1.5" y="2.5" width="17" height="13" fill="#f4f4f4" stroke="#999"/><path d="M5 6h10M10 6v8" stroke="#222" stroke-width="1.4"/><rect x="14.5" y="14.5" width="9" height="9" rx="2" fill="#5d9b5d" stroke="#3f7d3f" stroke-width="0.7"/><path d="M19 16v6M16 19h6" stroke="#fff" stroke-width="2"/></svg>
<svg style="left:9px;top:396px" width="24" height="24" viewBox="0 0 24 24"><rect x="1" y="1" width="4" height="4" fill="#f6b400"/><rect x="1" y="7" width="4" height="4" fill="#e04010"/><rect x="1" y="13" width="4" height="4" fill="#1a8a3a"/><path d="M7 4h4M7 10h6M7 16h3" stroke="#999" stroke-width="1"/><rect x="14.5" y="14.5" width="9" height="9" rx="2" fill="#5d9b5d" stroke="#3f7d3f" stroke-width="0.7"/><path d="M19 16v6M16 19h6" stroke="#fff" stroke-width="2"/></svg>
<svg style="left:7px;top:428px" width="24" height="24" viewBox="0 0 24 24"><rect x="1" y="4" width="22" height="4" fill="#555"/><path d="M6 6h4M14 6h4" stroke="#ddd" stroke-width="1.5"/><rect x="14.5" y="14.5" width="9" height="9" rx="2" fill="#5d9b5d" stroke="#3f7d3f" stroke-width="0.7"/><path d="M19 16v6M16 19h6" stroke="#fff" stroke-width="2"/></svg>
<svg style="left:10px;top:453px" width="24" height="24" viewBox="0 0 24 24"><path d="M8 1L2 20l6-5 4 1z" fill="#5b8cc8" stroke="#3c6a9c" stroke-width="0.6"/><rect x="14.5" y="14.5" width="9" height="9" rx="2" fill="#5d9b5d" stroke="#3f7d3f" stroke-width="0.7"/><path d="M19 16v6M16 19h6" stroke="#fff" stroke-width="2"/></svg>
<svg style="left:8px;top:481px" width="24" height="24" viewBox="0 0 24 24"><rect x="1.5" y="9.5" width="12" height="8" fill="#cde4f8" stroke="#8aa6c6"/><circle cx="15" cy="12" r="6" fill="#f2b2b2" stroke="#d08080"/><path d="M9 2L3 12h12z" fill="#bfe8b0" stroke="#8cbf80"/><rect x="14.5" y="14.5" width="9" height="9" rx="2" fill="#4f8a4f" stroke="#3f7d3f" stroke-width="0.7"/><path d="M16.5 16.5l3 3M21 17l-3 3" stroke="#222" stroke-width="1.2"/></svg>
<svg style="left:8px;top:511px" width="24" height="24" viewBox="0 0 24 24"><path d="M2 18L18 3" stroke="#111" stroke-width="1.3"/><path d="M18 2l-7 1.5 5.5 5.5z" fill="#fff" stroke="#111" stroke-width="1.2"/><rect x="0.5" y="16.5" width="3" height="3" fill="#111"/><rect x="14.5" y="14.5" width="9" height="9" rx="2" fill="#5d9b5d" stroke="#3f7d3f" stroke-width="0.7"/><path d="M19 16v6M16 19h6" stroke="#fff" stroke-width="2"/></svg>
<svg style="left:7px;top:539px" width="24" height="24" viewBox="0 0 24 24"><path d="M8 2L2 19M8 2l10 6" stroke="#111" stroke-width="1.4"/><path d="M2 19L18 8" stroke="#111" stroke-width="1" stroke-dasharray="1.5,1.5"/><circle cx="8" cy="2.5" r="2.4" fill="#2f7de0"/><circle cx="2.5" cy="19" r="2.4" fill="#2f7de0"/><circle cx="18" cy="8" r="2.4" fill="#2f7de0"/><rect x="14.5" y="14.5" width="9" height="9" rx="2" fill="#4f8a4f" stroke="#3f7d3f" stroke-width="0.7"/><path d="M16.5 16.5l3 3M21 17l-3 3" stroke="#222" stroke-width="1.2"/></svg>
<svg style="left:8px;top:569px" width="24" height="24" viewBox="0 0 24 24"><rect x="1.5" y="1.5" width="17" height="17" fill="#f4f4f4" stroke="#999"/><path d="M3 5h4M3 8h5M3 11h6M3 14h9" stroke="#5b8cc8" stroke-width="1.6"/><path d="M8 4l-2.5 2.5L8 9M14 4l2.5 2.5L14 9M12.5 3l-3 7" stroke="#111" stroke-width="1.1" fill="none"/><rect x="14.5" y="14.5" width="9" height="9" rx="2" fill="#5d9b5d" stroke="#3f7d3f" stroke-width="0.7"/><path d="M19 16v6M16 19h6" stroke="#fff" stroke-width="2"/></svg>
<svg style="left:8px;top:598px" width="24" height="24" viewBox="0 0 24 24"><rect x="1.5" y="1.5" width="17" height="18" fill="#eef4fb" stroke="#8aa6c6"/><rect x="2" y="2" width="16" height="3.5" fill="#bcd4ee"/><path d="M3 4h3M8 4h8M3 8h3M8 8h8M3 11h3M8 11h8M3 14h3M8 14h8M3 17h3" stroke="#5b8cc8" stroke-width="1"/><rect x="14.5" y="14.5" width="9" height="9" rx="2" fill="#5d9b5d" stroke="#3f7d3f" stroke-width="0.7"/><path d="M19 16v6M16 19h6" stroke="#fff" stroke-width="2"/></svg>
<div class="a" style="left:1px;top:772px;width:1197px;height:20px;background:#f0f0f0"></div>
<div class="a" style="left:2px;top:775px;width:115px;height:16px;border:3px solid #d42a2a"></div>
<div class="t" style="left:5px;top:778px;font-size:12px;color:#111;transform:scaleX(0.976)">Redrawing map</div>
<div class="a" style="left:762px;top:775px;width:64px;height:15px;border:3px solid #d42a2a;background:#fff"></div>
<div class="a" style="left:771px;top:778px;width:51px;height:9px;background:#1e80e0;border-radius:1px"></div>
<div class="t" style="left:826px;top:779px;font-size:12px;color:#111;transform:scaleX(0.876)">x: 169.334 mm y: 82.7021 mm page: 1</div>
<div class="a" style="left:1024px;top:775px;width:99px;height:16px;background:#fff;border:1px solid #d2d2d2;border-radius:2px"></div>
<div class="a" style="left:1104px;top:776px;width:18px;height:14px;background:#f3f3f3"></div>
<div class="t" style="left:1027px;top:778px;font-size:12px;color:#111;transform:scaleX(0.882)">74.1%</div>
<svg style="left:1108px;top:780px" width="10" height="6" viewBox="0 0 10 6"><path d="M0.5 0.5h9L5 5z" fill="#444"/></svg>
<div class="a" style="left:1127px;top:779px;width:57px;height:6px;background:#e4e4e4;border:1px solid #d6d6d6;border-radius:3px"></div>
<div class="a" style="left:1127px;top:779px;width:5px;height:6px;background:#1e80e0;border-radius:2px"></div>
<div class="a" style="left:1131px;top:775px;width:14px;height:14px;background:#fdfdfd;border:1px solid #cfcfcf;border-radius:2px"></div>
<div class="a" style="left:0;top:0;width:1200px;height:1px;background:#4a4a4a"></div>
<div class="a" style="left:0;top:0;width:1px;height:793px;background:#4a4a4a"></div>
<div class="a" style="left:1198px;top:0;width:2px;height:793px;background:#4a4a4a"></div>
<div class="a" style="left:0;top:792px;width:1200px;height:1px;background:#4a4a4a"></div>

</body></html>
